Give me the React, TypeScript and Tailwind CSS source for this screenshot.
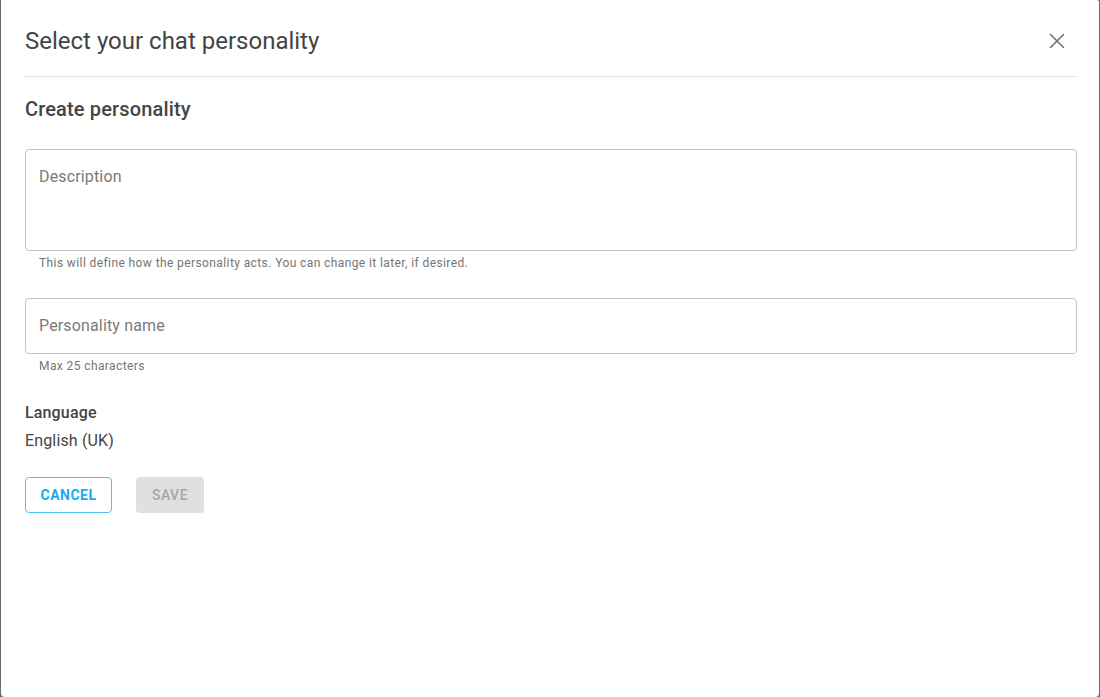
import { X } from "lucide-react";

const fieldBox =
  "w-full rounded-[4px] border border-[#c4c4c4] px-[13px] pt-[15px] text-[16px] leading-[24px] tracking-[0.15px] text-[#7a7a7a]";

const helper = "mt-[4px] pl-[14px] text-[12px] leading-[16px] tracking-[0.4px] text-[#757575]";

const App = () => {
  return (
    <div className="h-[697px] w-[1100px] bg-[#6b6b6b] px-[1px] font-['Roboto',sans-serif]">
      <div className="h-full w-full rounded-b-[4px] rounded-tr-[2px] bg-white pl-[24px] pr-[22px]">
        {/* Header */}
        <div className="flex h-[77px] items-start justify-between border-b border-[#e0e0e0] pt-[26px]">
          <h2 className="text-[24px] leading-[30px] text-[#444444]">
            Select your chat personality
          </h2>
          <button className="mr-[7px] mt-[2px] text-[#737373]">
            <X size={26} strokeWidth={1.5} />
          </button>
        </div>

        <h3 className="mt-[20px] text-[20px] font-medium leading-[24px] tracking-[0.15px] text-[#444444]">
          Create personality
        </h3>

        {/* Description */}
        <div className={`mt-[28px] h-[102px] ${fieldBox}`}>Description</div>
        <p className={helper}>
          This will define how the personality acts. You can change it later, if desired.
        </p>

        {/* Name */}
        <div className={`mt-[27px] h-[56px] ${fieldBox}`}>Personality name</div>
        <p className={helper}>Max 25 characters</p>

        <div className="mt-[27px] text-[16px] font-medium leading-[24px] tracking-[0.15px] text-[#444444]">
          Language
        </div>
        <div className="mt-[4px] text-[16px] leading-[24px] tracking-[0.15px] text-[#444444]">
          English (UK)
        </div>

        {/* Actions */}
        <div className="mt-[24px] flex gap-[24px]">
          <button className="h-[36px] w-[87px] rounded-[4px] border border-[#4fc3f7] text-[14px] font-bold tracking-[0.5px] text-[#1aa9f0]">
            CANCEL
          </button>
          <button
            disabled
            className="h-[36px] w-[68px] rounded-[4px] bg-[#e0e0e0] text-[14px] font-medium tracking-[0.5px] text-[#a6a6a6]"
          >
            SAVE
          </button>
        </div>
      </div>
    </div>
  );
};

export default App;
